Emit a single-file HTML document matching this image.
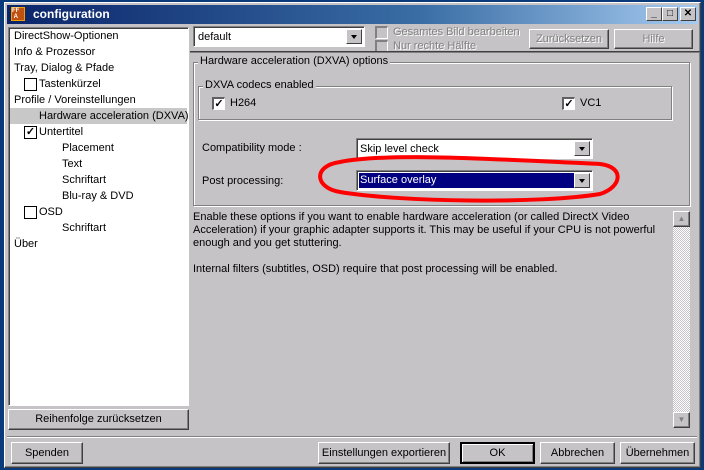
<!DOCTYPE html>
<html><head><meta charset="utf-8"><style>
*{margin:0;padding:0;box-sizing:border-box}
body{width:704px;height:470px;overflow:hidden;background:#0a3a7a;font-family:"Liberation Sans",sans-serif;font-size:11px;color:#000;position:relative}
.a{position:absolute}
.win{left:4px;top:2px;width:697px;height:466px;background:#c6c3c6;border:1px solid #fff;border-right-color:#404040;border-bottom-color:#404040;box-shadow:inset -1px -1px #808080,inset 1px 1px #c6c3c6}
.title{left:7px;top:5px;width:691px;height:19px;background:linear-gradient(90deg,#0a246a,#3a6ea5 60%,#a6caf0);color:#fff;font-weight:bold;font-size:12px;line-height:19px;padding-left:26px}
.tb{width:16px;height:14px;top:7px;background:#c6c3c6;border:1px solid #fff;border-right-color:#404040;border-bottom-color:#404040;font-size:10px;font-weight:bold;text-align:center;line-height:12px}
.btn{background:#c6c3c6;border:1px solid #fff;border-right-color:#404040;border-bottom-color:#404040;box-shadow:inset -1px -1px #808080;text-align:center;line-height:18px}
.sunk{border:1px solid #808080;border-right-color:#fff;border-bottom-color:#fff;box-shadow:inset 1px 1px #404040}
.tree div{position:absolute;white-space:nowrap;line-height:16px}
.cb{position:absolute;width:13px;height:13px;background:#fff;border-top:2px solid #606060;border-left:2px solid #606060;border-right:1px solid #fff;border-bottom:1px solid #fff;font-size:11px;line-height:10px;text-align:center;font-weight:bold}
.tcb{position:absolute;width:13px;height:13px;background:#fff;border:1px solid #000;font-size:11px;line-height:11px;text-align:center;font-weight:bold}
.combo{background:#fff;line-height:13px}
.arr{position:absolute;right:2px;top:2px;width:16px;height:15px;background:#c6c3c6;border:1px solid #fff;border-right-color:#404040;border-bottom-color:#404040}
.arr:after{content:"";position:absolute;left:4px;top:5px;border:3.5px solid transparent;border-top:4px solid #000}
.grp{border:1px solid #808080;box-shadow:1px 1px #fff,inset 1px 1px #fff}
.lg{background:#c6c3c6;padding:0 2px;top:-8px;left:4px;position:absolute}
.dis{color:#808080;text-shadow:1px 1px #fff}
</style></head><body>
<div class="a win"></div>
<div class="a title">configuration</div>
<div class="a" style="left:11px;top:7px;width:14px;height:14px;background:#c05010;border:1px solid #f0a000;color:#fff;font-size:6px;line-height:6px;font-weight:bold">FF<br>&nbsp;A</div>
<div class="a tb" style="left:646px">_</div>
<div class="a tb" style="left:662px">□</div>
<div class="a tb" style="left:680px">✕</div>

<div class="a sunk tree" style="left:8px;top:27px;width:181px;height:379px;background:#fff">
<div style="left:5px;top:0">DirectShow-Optionen</div>
<div style="left:5px;top:16px">Info &amp; Prozessor</div>
<div style="left:5px;top:32px">Tray, Dialog &amp; Pfade</div>
<span class="tcb" style="left:15px;top:50px"></span><div style="left:30px;top:48px">Tastenkürzel</div>
<div style="left:5px;top:64px">Profile / Voreinstellungen</div>
<div style="left:1px;top:80px;width:177px;background:#c8c8c8;padding-left:29px">Hardware acceleration (DXVA)</div>
<span class="tcb" style="left:15px;top:98px">✓</span><div style="left:30px;top:96px">Untertitel</div>
<div style="left:53px;top:112px">Placement</div>
<div style="left:53px;top:128px">Text</div>
<div style="left:53px;top:144px">Schriftart</div>
<div style="left:53px;top:160px">Blu-ray &amp; DVD</div>
<span class="tcb" style="left:15px;top:178px"></span><div style="left:30px;top:176px">OSD</div>
<div style="left:53px;top:192px">Schriftart</div>
<div style="left:5px;top:208px">Über</div>
</div>
<div class="a btn" style="left:8px;top:409px;width:181px;height:21px">Reihenfolge zurücksetzen</div>

<div class="a sunk combo" style="left:193px;top:26px;width:172px;height:21px;padding:4px 4px">default<div class="arr"></div></div>
<span class="cb" style="left:375px;top:26px;background:#c6c3c6;border-top-color:#808080;border-left-color:#808080"></span>
<span class="cb" style="left:375px;top:40px;background:#c6c3c6;border-top-color:#808080;border-left-color:#808080"></span>
<div class="a dis" style="left:393px;top:26px">Gesamtes Bild bearbeiten</div>
<div class="a dis" style="left:393px;top:40px">Nur rechte Hälfte</div>
<div class="a btn dis" style="left:529px;top:29px;width:80px;height:20px">Zurücksetzen</div>
<div class="a btn dis" style="left:614px;top:29px;width:79px;height:20px">Hilfe</div>

<div class="a" style="left:190px;top:51px;width:510px;height:2px;border-top:1px solid #404040;border-bottom:1px solid #808080"></div>

<div class="a grp" style="left:193px;top:62px;width:497px;height:144px"><span class="lg">Hardware acceleration (DXVA) options</span></div>
<div class="a grp" style="left:198px;top:86px;width:474px;height:34px"><span class="lg">DXVA codecs enabled</span></div>
<span class="cb" style="left:212px;top:97px">✓</span><div class="a" style="left:230px;top:97px">H264</div>
<span class="cb" style="left:562px;top:97px">✓</span><div class="a" style="left:580px;top:97px">VC1</div>
<div class="a" style="left:202px;top:142px">Compatibility mode :</div>
<div class="a sunk combo" style="left:356px;top:138px;width:237px;height:21px;padding:4px 3px">Skip level check<div class="arr"></div></div>
<div class="a" style="left:202px;top:175px">Post processing:</div>
<div class="a sunk combo" style="left:356px;top:170px;width:237px;height:21px;padding:2px 2px"><div style="background:#000080;color:#fff;height:15px;width:216px;padding:1px 1px;line-height:13px">Surface overlay</div><div class="arr"></div></div>
<svg class="a" style="left:310px;top:152px" width="320" height="55"><path d="M30 10 C80 0 200 8 290 12 C315 15 312 35 290 42 C230 52 90 50 30 40 C5 36 2 14 30 10Z" fill="none" stroke="#f00" stroke-width="4"/></svg>

<div class="a" style="left:193px;top:211px;width:480px;line-height:13px">Enable these options if you want to enable hardware acceleration (or called DirectX Video Acceleration) if your graphic adapter supports it. This may be useful if your CPU is not powerful enough and you get stuttering.<br><br>Internal filters (subtitles, OSD) require that post processing will be enabled.</div>
<div class="a" style="left:673px;top:211px;width:17px;height:217px;background:repeating-conic-gradient(#fff 0 25%,#c6c3c6 0 50%) 0 0/2px 2px"></div>
<div class="a btn" style="left:673px;top:211px;width:17px;height:16px;color:#808080;font-size:8px;line-height:13px">▲</div>
<div class="a btn" style="left:673px;top:412px;width:17px;height:16px;color:#808080;font-size:8px;line-height:13px">▼</div>

<div class="a" style="left:7px;top:436px;width:690px;height:2px;border-top:1px solid #808080;border-bottom:1px solid #fff"></div>
<div class="a btn" style="left:11px;top:442px;width:72px;height:22px;line-height:20px">Spenden</div>
<div class="a btn" style="left:318px;top:442px;width:132px;height:22px;line-height:20px">Einstellungen exportieren</div>
<div class="a btn" style="left:460px;top:442px;width:75px;height:22px;line-height:18px;border:2px solid #000;box-shadow:inset 1px 1px #fff,inset -1px -1px #808080">OK</div>
<div class="a btn" style="left:540px;top:442px;width:75px;height:22px;line-height:20px">Abbrechen</div>
<div class="a btn" style="left:620px;top:442px;width:75px;height:22px;line-height:20px">Übernehmen</div>
</body></html>
